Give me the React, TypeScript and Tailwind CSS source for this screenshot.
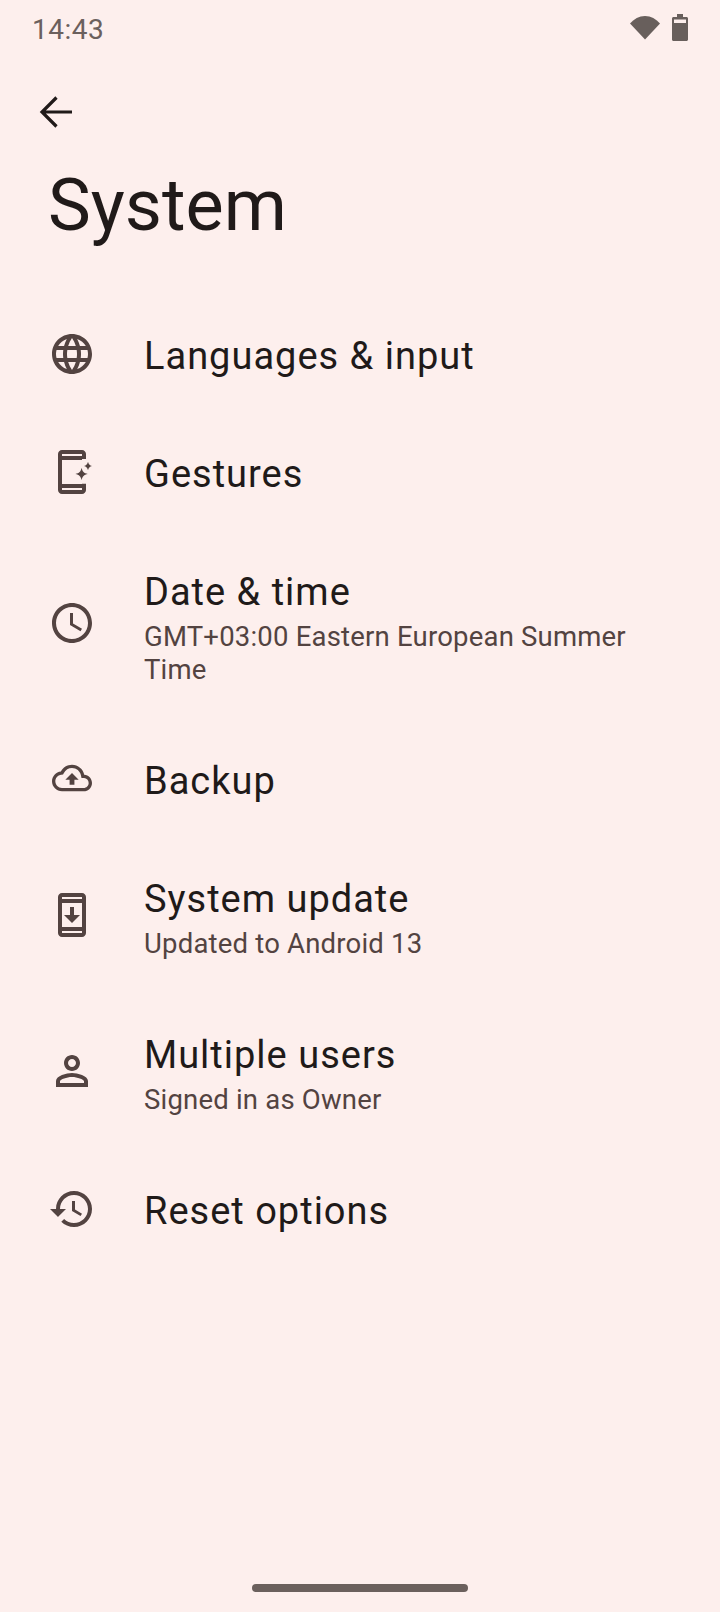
const iconPaths = {
  language:
    "M11.99 2C6.47 2 2 6.48 2 12s4.47 10 9.99 10C17.52 22 22 17.52 22 12S17.52 2 11.99 2zm6.93 6h-2.95c-.32-1.25-.78-2.45-1.38-3.56 1.84.63 3.37 1.91 4.33 3.56zM12 4.04c.83 1.2 1.48 2.53 1.91 3.96h-3.82c.43-1.43 1.08-2.76 1.91-3.96zM4.26 14C4.1 13.36 4 12.69 4 12s.1-1.36.26-2h3.38c-.08.66-.14 1.32-.14 2s.06 1.34.14 2H4.26zm.82 2h2.95c.32 1.25.78 2.45 1.38 3.56-1.84-.63-3.37-1.9-4.33-3.56zm2.95-8H5.08c.96-1.66 2.49-2.93 4.33-3.56C8.81 5.55 8.35 6.75 8.03 8zM12 19.96c-.83-1.2-1.48-2.53-1.91-3.96h3.82c-.43 1.43-1.08 2.76-1.91 3.96zM14.34 14H9.66c-.09-.66-.16-1.32-.16-2s.07-1.35.16-2h4.68c.09.65.16 1.32.16 2s-.07 1.34-.16 2zm.25 5.56c.6-1.11 1.06-2.31 1.38-3.56h2.95c-.96 1.65-2.49 2.93-4.33 3.56zM16.36 14c.08-.66.14-1.32.14-2s-.06-1.34-.14-2h3.38c.16.64.26 1.31.26 2s-.1 1.36-.26 2h-3.38z",
  gestures:
    "M7 1h10c1.1 0 2 .9 2 2v2.500h-2V6H7v12h10v-.1h2V21c0 1.100-.9 2-2 2H7c-1.100 0-2-.9-2-2V3c0-1.100.9-2 2-2zm0 2v1h10V3H7zm0 17v1h10v-1H7zM16.800 9.900c.4 1.900 1.200 2.700 3.100 3.100-1.900.4-2.700 1.200-3.100 3.100-.4-1.900-1.200-2.700-3.100-3.100 1.900-.4 2.700-1.200 3.100-3.100zM20 6.900c.2 1.100.9 1.900 2 2.100-1.100.2-1.800 1-2 2.100-.2-1.100-.9-1.900-2-2.100 1.100-.2 1.800-1 2-2.100z",
  clock:
    "M11.99 2C6.47 2 2 6.48 2 12s4.47 10 9.99 10C17.52 22 22 17.52 22 12S17.52 2 11.99 2zM12 20c-4.42 0-8-3.58-8-8s3.58-8 8-8 8 3.58 8 8-3.58 8-8 8zM12.5 7H11v6l5.25 3.15.75-1.23-4.5-2.67z",
  cloud:
    "M19.35 10.04C18.67 6.59 15.64 4 12 4 9.11 4 6.6 5.64 5.35 8.04 2.34 8.36 0 10.91 0 14c0 3.31 2.69 6 6 6h13c2.76 0 5-2.24 5-5 0-2.64-2.05-4.78-4.65-4.96zM19 18H6c-2.21 0-4-1.79-4-4 0-2.05 1.53-3.76 3.56-3.97l1.07-.11.5-.95C8.08 7.14 9.94 6 12 6c2.62 0 4.88 1.86 5.39 4.43l.3 1.5 1.53.11c1.56.1 2.78 1.41 2.78 2.96 0 1.65-1.35 3-3 3zM8 13h2.55v3h2.9v-3H16l-4-4z",
  update:
    "M17 1.01L7 1c-1.1 0-2 .9-2 2v18c0 1.1.9 2 2 2h10c1.1 0 2-.9 2-2V3c0-1.1-.9-1.99-2-1.99zM17 21H7v-1h10v1zm0-3H7V6h10v12zm0-14H7V3h10v1zM16 12h-3V8h-2v4H8l4 4 4-4z",
  person:
    "M12 6c1.1 0 2 .9 2 2s-.9 2-2 2-2-.9-2-2 .9-2 2-2m0 9c2.7 0 5.8 1.29 6 2v1H6v-.99c.2-.72 3.3-2.01 6-2.01m0-11C9.79 4 8 5.79 8 8s1.79 4 4 4 4-1.79 4-4-1.79-4-4-4zm0 9c-2.67 0-8 1.34-8 4v3h16v-3c0-2.66-5.33-4-8-4z",
  history:
    "M13 3c-4.97 0-9 4.03-9 9H1l3.89 3.89.07.14L9 12H6c0-3.87 3.13-7 7-7s7 3.13 7 7-3.13 7-7 7c-1.93 0-3.68-.79-4.94-2.06l-1.42 1.42C8.27 19.99 10.51 21 13 21c4.97 0 9-4.03 9-9s-4.03-9-9-9zm-1 5v5l4.28 2.54.72-1.21-3.5-2.08V8H12z",
};

function RowIcon({ name, iconClass }: { name: keyof typeof iconPaths; iconClass: string }) {
  return (
    <div className={`w-[96px] shrink-0 flex justify-center ${iconClass}`}>
      <svg
        className={name === "cloud" ? "w-[40px] h-[40px]" : "w-[48px] h-[48px]"}
        viewBox="0 0 24 24"
        fill="#534341"
        fillRule="evenodd"
      >
        <path d={iconPaths[name]} />
      </svg>
    </div>
  );
}

function Row({
  icon,
  title,
  summary,
  rowClass,
  iconClass = "pb-[3px]",
}: {
  icon: keyof typeof iconPaths;
  title: string;
  summary?: string;
  rowClass: string;
  iconClass?: string;
}) {
  return (
    <div className={`flex items-center pl-[24px] pr-[48px] ${rowClass}`}>
      <RowIcon name={icon} iconClass={iconClass} />
      <div className="pl-[24px] pt-[2px] min-w-0">
        <div className="text-[38px] leading-[46px] tracking-[1px] text-[#201a19]">{title}</div>
        {summary && (
          <div className="text-[27.5px] leading-[33px] tracking-[0.2px] text-[#534341] mt-[5px]">{summary}</div>
        )}
      </div>
    </div>
  );
}

export default function App() {
  return (
    <div className="w-[720px] h-[1612px] bg-[#fdefed] flex flex-col font-['Roboto',sans-serif]">
      <div className="h-[58px] flex items-center justify-between pl-[32px] pr-[32px] shrink-0">
        <span className="text-[28px] leading-none tracking-[0.5px] pt-[2px] text-[#6b605d]">14:43</span>
        <div className="flex items-center gap-[11px] pb-[4px]">
          <svg className="w-[32px] h-[26px]" viewBox="0 0 32 26" fill="#685f5c">
            <path d="M1 9.500C5 5 10 2 16 2s11 3 15 7.500L16 25.500z" />
          </svg>
          <svg className="w-[16px] h-[28px]" viewBox="0 0 16 28" fill="#685f5c">
            <path
              fillRule="evenodd"
              d="M5 1h6v3h3.500c.8 0 1.500.7 1.500 1.500v21c0 .8-.7 1.500-1.500 1.500h-13C.7 28 0 27.300 0 26.500v-21C0 4.700.7 4 1.500 4H5V1zM2 6.500V10h12V6.500H2z"
            />
          </svg>
        </div>
      </div>

      <div className="h-[108px] flex items-center pl-[39px] shrink-0">
        <svg className="w-[34px] h-[34px]" viewBox="0 0 34 34" fill="none" stroke="#201a19" strokeWidth="3.200">
          <path d="M33 17H4M17.500 2.500L3 17l14.500 14.500" />
        </svg>
      </div>

      <div className="h-[130px] pl-[48px] pt-[4px] shrink-0 flex items-start">
        <h1 className="text-[72px] leading-[72px] text-[#201a19]">System</h1>
      </div>

      <div className="flex flex-col">
        <Row icon="language" title="Languages & input" rowClass="h-[118px]" />
        <Row icon="gestures" title="Gestures" rowClass="h-[118px]" />
        <Row
          icon="clock"
          title="Date & time"
          summary="GMT+03:00 Eastern European Summer Time"
          rowClass="h-[189px]"
          iconClass="pb-[8px]"
        />
        <Row icon="cloud" title="Backup" rowClass="h-[118px]" iconClass="pb-[5px]" />
        <Row icon="update" title="System update" summary="Updated to Android 13" rowClass="h-[156px]" iconClass="pb-[5px]" />
        <Row icon="person" title="Multiple users" summary="Signed in as Owner" rowClass="h-[156px]" iconClass="pb-[5px]" />
        <Row icon="history" title="Reset options" rowClass="h-[118px]" />
      </div>

      <div className="mt-auto h-[30px] flex justify-center shrink-0">
        <div className="w-[216px] h-[8px] rounded-full bg-[#6b605d] mt-[2px]" />
      </div>
    </div>
  );
}
